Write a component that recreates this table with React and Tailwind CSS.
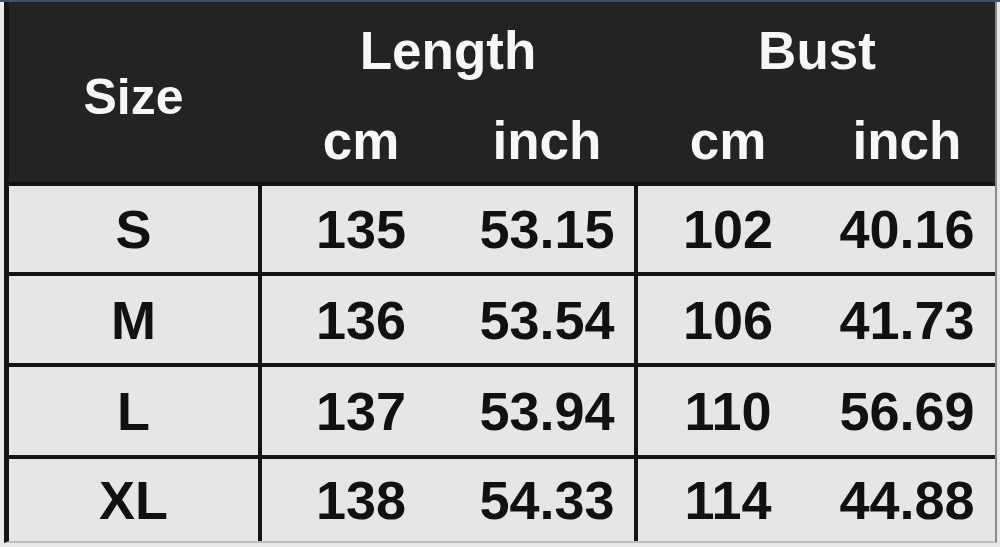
import React from 'react'

const rows = [
  { size: 'S', len: ['135', '53.15'], bust: ['102', '40.16'], h: 'h-[90px]' },
  { size: 'M', len: ['136', '53.54'], bust: ['106', '41.73'], h: 'h-[91px]' },
  { size: 'L', len: ['137', '53.94'], bust: ['110', '56.69'], h: 'h-[92px]' },
  { size: 'XL', len: ['138', '54.33'], bust: ['114', '44.88'], h: 'h-[86px]' },
]

// same column widths for header and body so the text lines up
const cols = 'grid grid-cols-[249px_202px_174px_184px_178px]'

export default function App() {
  return (
    <div className="w-[1000px] h-[547px] overflow-hidden bg-[#e9e9e9] font-['Liberation_Sans',Arial,sans-serif] font-bold leading-none">
      <div className="h-[2px] bg-[#3f5169]" />
      <div className="ml-[4px] w-[993px] border-l-[5px] border-r-2 border-b-2 border-l-[#141414] border-r-[#8a8a8a] border-b-[#bdbdbd]">
        {/* header */}
        <div className={`${cols} grid-rows-[96px_84px] bg-[#232323] text-[#f7f7f7] text-[53px]`}>
          <div className="row-span-2 flex items-center justify-center pt-[10px] text-[50px]">Size</div>
          <div className="col-span-2 border-l-4 border-[#232323] flex items-center justify-center">Length</div>
          <div className="col-span-2 border-l-4 border-[#232323] flex items-center justify-center">Bust</div>
          <div className="border-l-4 border-[#232323] flex items-center justify-center">cm</div>
          <div className="flex items-center justify-center">inch</div>
          <div className="border-l-4 border-[#232323] flex items-center justify-center">cm</div>
          <div className="flex items-center justify-center">inch</div>
        </div>

        {/* body */}
        {rows.map((r) => (
          <div key={r.size} className={`${cols} ${r.h} border-t-4 border-[#141414] bg-[#e6e6e6] text-[#111] text-[54px]`}>
            <div className="flex items-center justify-center">{r.size}</div>
            <div className="border-l-4 border-[#141414] flex items-center justify-center">{r.len[0]}</div>
            <div className="flex items-center justify-center">{r.len[1]}</div>
            <div className="border-l-4 border-[#141414] flex items-center justify-center">{r.bust[0]}</div>
            <div className="flex items-center justify-center">{r.bust[1]}</div>
          </div>
        ))}
      </div>
    </div>
  )
}
